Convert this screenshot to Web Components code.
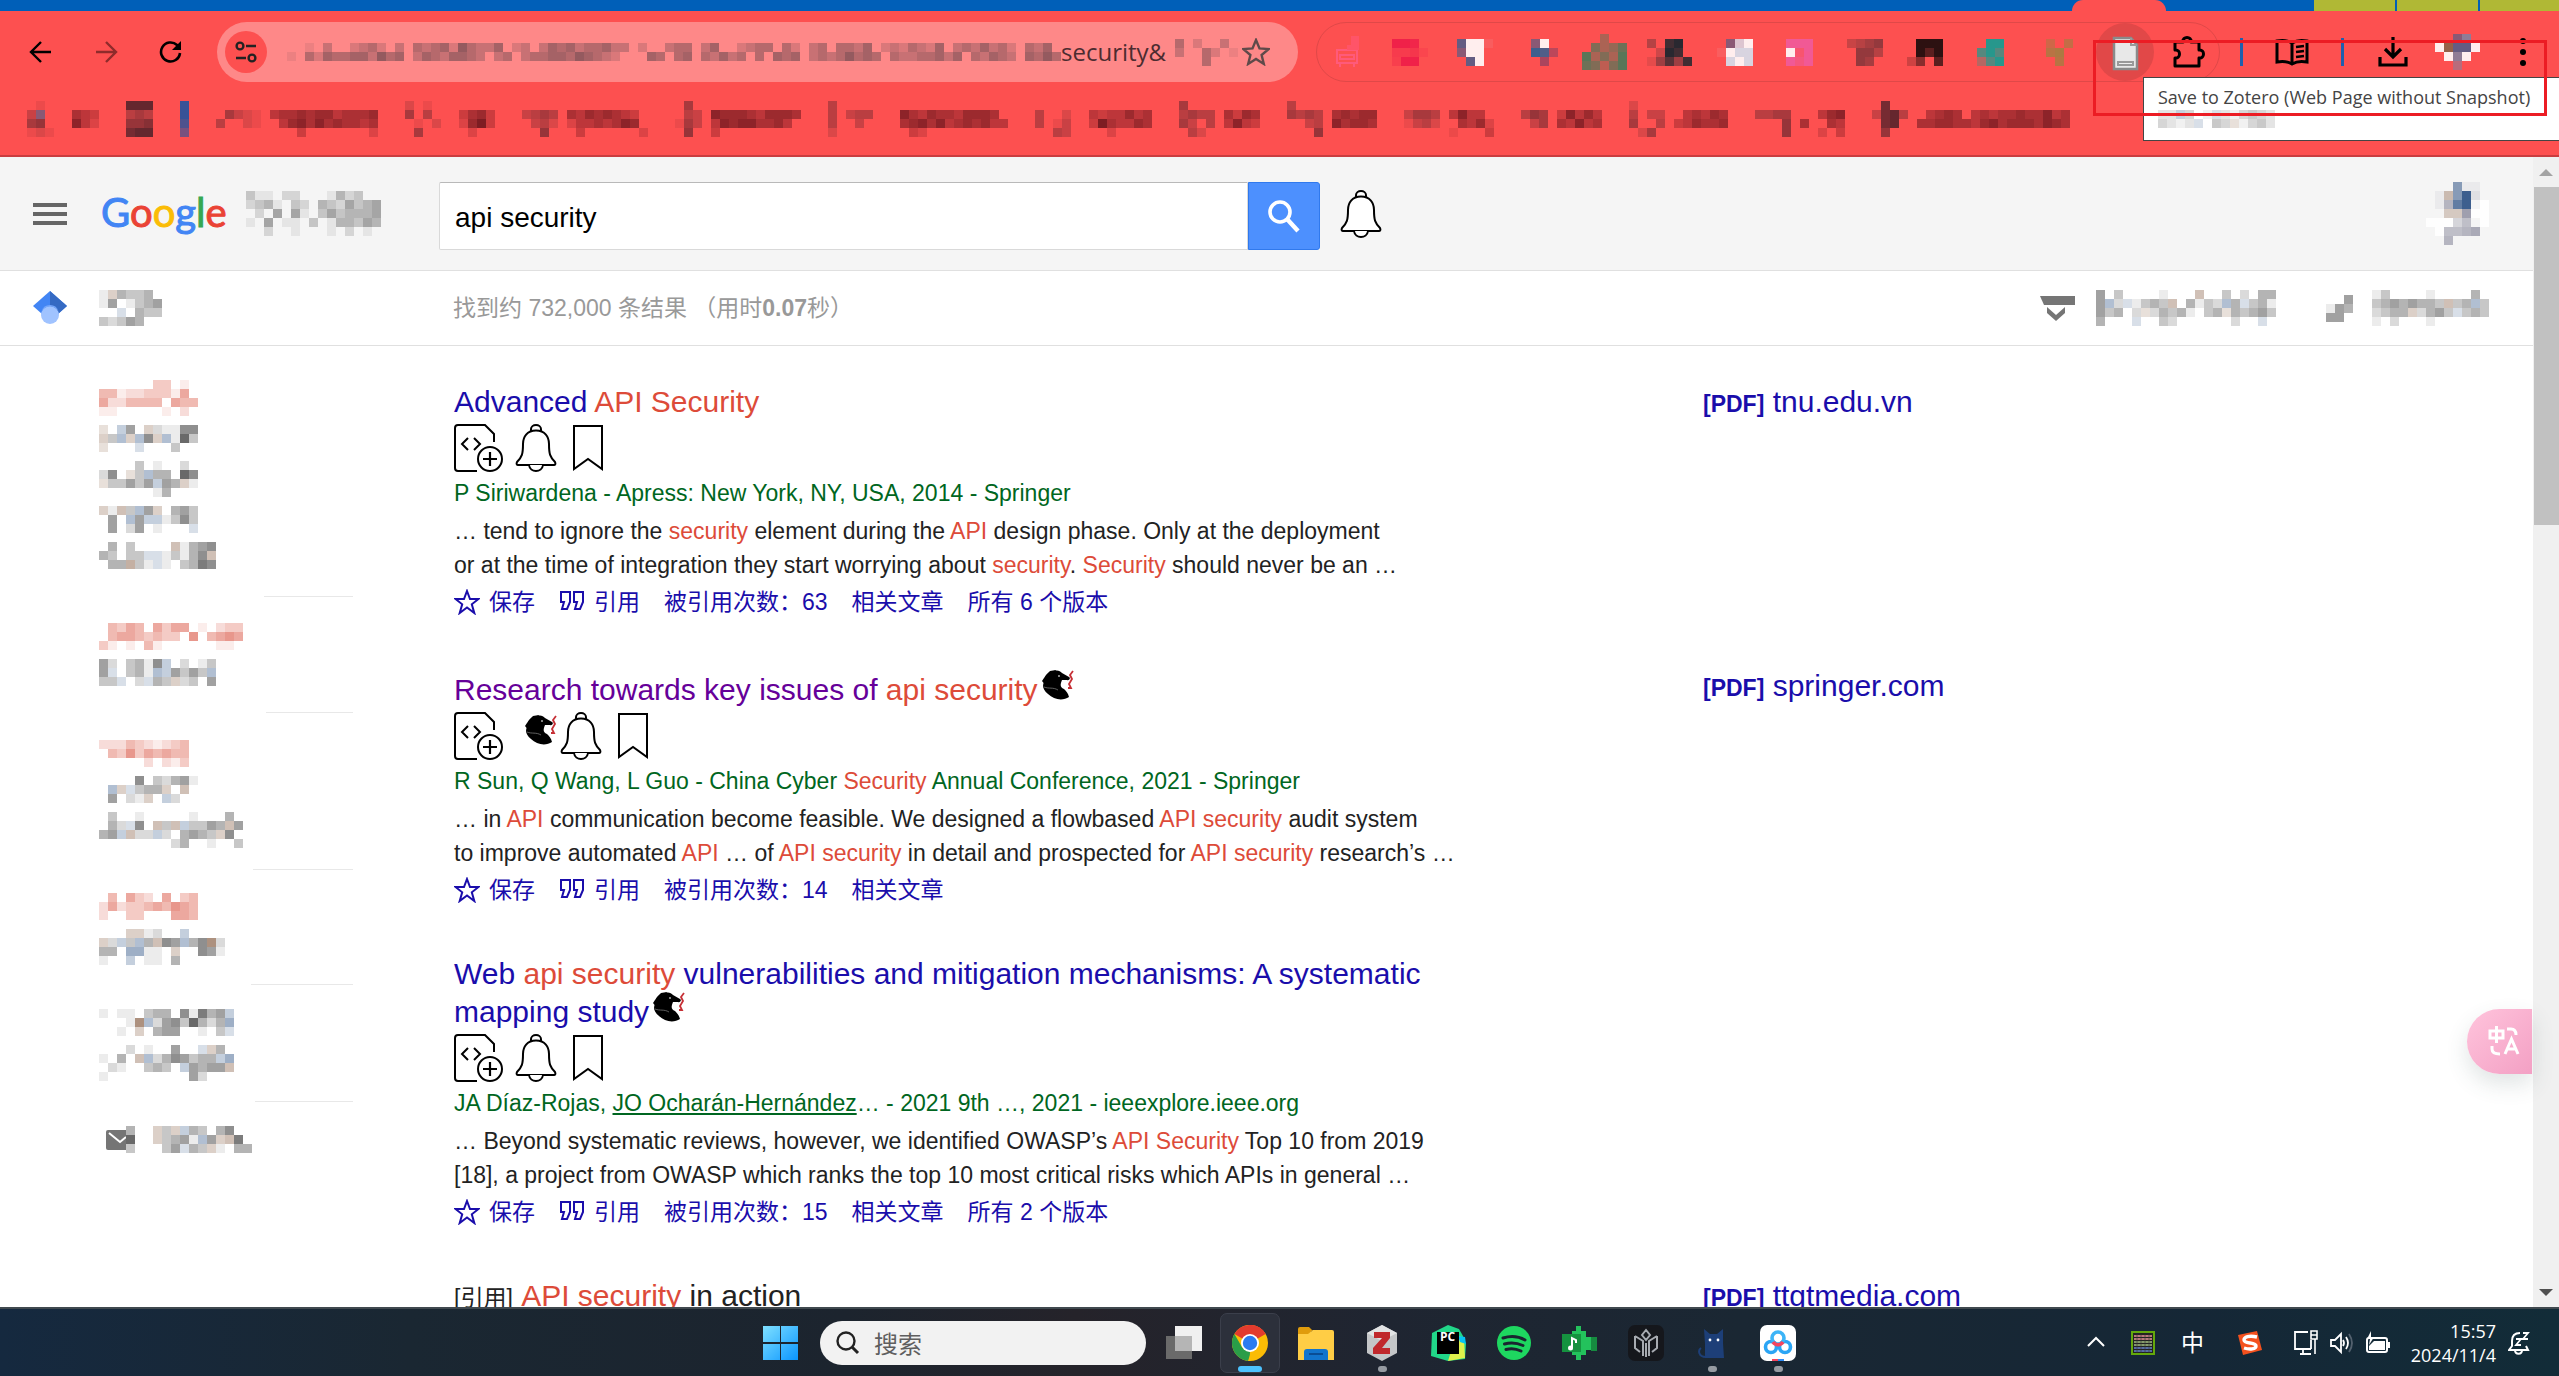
<!DOCTYPE html>
<html lang="zh-CN">
<head>
<meta charset="utf-8">
<title>api security - Google</title>
<style>
  html, body {
    margin: 0;
    height: 100%;
  }
  body {
    display: flex;
    flex-direction: column;
    overflow: hidden;
    background: #fff;
    color: #222;
    font: 23px/34px "Liberation Sans", "Noto Sans CJK SC", sans-serif;
  }
  a {
    color: #1a0dab;
    text-decoration: none;
  }
  a.visited {
    color: #609;
  }
  a.author {
    color: #006621;
    text-decoration: underline;
  }
  b {
    font-weight: inherit;
    color: #dd4b39;
  }
  scholar-page {
    flex: 1;
    min-height: 0;
  }
</style>
</head>
<body>
<browser-chrome></browser-chrome>

<scholar-page>
  <search-result>
    <a slot="title" href="#">Advanced <b>API Security</b></a>
    <span slot="authors">P Siriwardena - Apress: New York, NY, USA, 2014 - Springer</span>
    <span slot="snippet">… tend to ignore the <b>security</b> element during the <b>API</b> design phase. Only at the deployment<br>or at the time of integration they start worrying about <b>security</b>. <b>Security</b> should never be an …</span>
    <a slot="links" href="#">被引用次数：63</a>
    <a slot="links" href="#">相关文章</a>
    <a slot="links" href="#">所有 6 个版本</a>
    <a slot="file" href="#">tnu.edu.vn</a>
  </search-result>
  <search-result raven>
    <span slot="title"><a class="visited" href="#">Research towards key issues of <b>api security</b></a><ui-icon name="raven" style="margin-left: 4px"></ui-icon></span>
    <span slot="authors">R Sun, Q Wang, L Guo - China Cyber <b>Security</b> Annual Conference, 2021 - Springer</span>
    <span slot="snippet">… in <b>API</b> communication become feasible. We designed a flowbased <b>API security</b> audit system<br>to improve automated <b>API</b> … of <b>API security</b> in detail and prospected for <b>API security</b> research’s …</span>
    <a slot="links" href="#">被引用次数：14</a>
    <a slot="links" href="#">相关文章</a>
    <a slot="file" href="#">springer.com</a>
  </search-result>
  <search-result>
    <span slot="title"><a href="#">Web <b>api security</b> vulnerabilities and mitigation mechanisms: A systematic mapping study</a><ui-icon name="raven" style="margin: -8px 0 0 4px"></ui-icon></span>
    <span slot="authors">JA Díaz-Rojas, <a class="author" href="#">JO Ocharán-Hernández</a>… - 2021 9th …, 2021 - ieeexplore.ieee.org</span>
    <span slot="snippet">… Beyond systematic reviews, however, we identified OWASP’s <b>API Security</b> Top 10 from 2019<br>[18], a project from OWASP which ranks the top 10 most critical risks which APIs in general …</span>
    <a slot="links" href="#">被引用次数：15</a>
    <a slot="links" href="#">相关文章</a>
    <a slot="links" href="#">所有 2 个版本</a>
  </search-result>
  <search-result>
    <span slot="title"><span style="font-size: 23px">[引用]</span> <b>API security</b> in action</span>
    <a slot="file" href="#">ttgtmedia.com</a>
  </search-result>
</scholar-page>

<task-bar></task-bar>

<script>
const ICONS = {
  back: [24, 24, '<path d="M22 12H3M12 2L2 12l10 10" fill="none" stroke="#000" stroke-width="2.4"/>'],
  forward: [24, 24, '<path d="M2 12h19M12 2l10 10-10 10" fill="none" stroke="#8f2b2b" stroke-width="2.4"/>'],
  reload: [24, 24, '<path d="M21 13a9.5 9.5 0 1 1-3-8l3 3" fill="none" stroke="#000" stroke-width="2.6"/><path d="M22 1v9h-9z"/>'],
  tune: [42, 42, '<circle cx="21" cy="21" r="21" fill="#fd5050"/><g fill="none" stroke="#222" stroke-width="2.4"><circle cx="15" cy="15" r="3.4"/><path d="M21 15h10M11 27h10"/><circle cx="27" cy="27" r="3.4"/></g>'],
  star: [28, 28, '<path d="M14 2l3.500 8.400 9 .7-6.900 5.900 2.200 8.900L14 21l-7.800 4.900 2.200-8.900L1.500 11.100l9-.7z" fill="none" stroke="#5f4a4a" stroke-width="2.4"/>'],
  tv: [28, 32, '<path d="M4 14h20v13H4zM7 27v4M21 27v4M7 19h14v4H7z" fill="none" stroke="#ff5a7a" stroke-width="2"/><path d="M18 0h8v14H14V9h4z" fill="#ff5468"/>'],
  zotdoc: [58, 58, '<circle cx="29" cy="29" r="29" fill="#e14848"/><path d="M18 15h17l6 7v24H18z" fill="#e8e8e8" stroke="#8a8a8a" stroke-width="2.500"/><path d="M35 15v7h6" fill="none" stroke="#999" stroke-width="2"/><path d="M21 38h17v5H21z" fill="#999"/><path d="M23 40.500h13" stroke="#eee"/>'],
  puzzle: [34, 34, '<path d="M4 7h8c-1-6 9-6 8 0h8v8c6-1 6 9 0 8v8H4v-8c6 1 6-9 0-8z" fill="none" stroke="#000" stroke-width="3" stroke-linejoin="round"/>'],
  book: [34, 30, '<path d="M17 6C12 3 7 3 2 4v21c5-1 10-1 15 2 5-3 10-3 15-2V4c-5-1-10-1-15 2zM17 6v21" fill="none" stroke="#000" stroke-width="3"/><path d="M21 10l8-1M21 15l8-1M21 20l8-1" stroke="#000" stroke-width="2.400"/>'],
  download: [30, 30, '<path d="M15 0v18M7 12l8 8 8-8M2 20v8h26v-8" fill="none" stroke="#000" stroke-width="3.200"/>'],
  dots: [8, 30, '<circle cx="4" cy="4" r="3"/><circle cx="4" cy="15" r="3"/><circle cx="4" cy="26" r="3"/>'],
  menu: [34, 24, '<path d="M0 3h34M0 12h34M0 21h34" stroke="#666" stroke-width="4"/>'],
  search: [32, 34, '<circle cx="12" cy="13" r="10" fill="none" stroke="#fff" stroke-width="3.600"/><path d="M19 20l11 12" stroke="#fff" stroke-width="4.400"/>'],
  bell: [42, 48, '<path d="M16 7V5a5 4 0 0 1 10 0v2M21 6.500C12 6.500 8 13 8 20c0 10-1 13-6 18-1 2 0 3 1 3h36c1 0 2-1 1-3-5-5-6-8-6-18 0-7-4-13.500-13-13.500z" fill="#fff" stroke="#000" stroke-width="2"/><path d="M14 41c1 8 13 8 14 0" fill="#fff" stroke="#000" stroke-width="2"/>'],
  file: [50, 48, '<path d="M23 47H4q-3 0-3-3V4q0-3 3-3h27l9 9v8" fill="none" stroke="#000" stroke-width="2"/><path d="M14 14l-6 6 6 6M20 14l6 6-6 6" fill="none" stroke="#000" stroke-width="2"/><circle cx="36" cy="35" r="12" fill="#fff" stroke="#000" stroke-width="2"/><path d="M29 35h14M36 28v14" stroke="#000" stroke-width="2.200"/>'],
  bookmark: [30, 48, '<path d="M1 2h28v43L15 35 1 45z" fill="#fff" stroke="#000" stroke-width="2"/>'],
  raven: [32, 33, '<path d="M2 15C3 7 8 4 12 4c4-1 6 0 8 2l7 4c2 1 0 4-2 3l-5 0c-2 5-2 7 2 9 2 2 4 4 5 8-6 4-15 3-21-3C1 23 0 19 2 15z" fill="#000"/><path d="M0 14l4-6 4-4 6-1-4 8-6 8z" fill="#000"/><path d="M2 20c5 2 9 0 14 3" stroke="#777" stroke-width=".8" fill="none"/><circle cx="17" cy="9" r="1" fill="#aaa"/><path d="M31 4l-3 4 2 4-3 5 2 4-3 0" stroke="#c62f35" stroke-width="1.800" fill="none"/>'],
  save: [26, 26, '<path d="M13 2l3 8h8.500l-6.700 5.300L20.300 24 13 18.500 5.700 24l2.500-8.700L1.500 10H10z" fill="none" stroke="#1a0dab" stroke-width="2"/>'],
  cite: [26, 26, '<path d="M2 3h9v10l-3 7H3l2-7H2zM15 3h9v10l-3 7h-5l2-7h-3z" fill="none" stroke="#1a0dab" stroke-width="2"/>'],
  scholar: [34, 34, '<path d="M17 0L0 15l9 8h16l9-8z" fill="#4285f4"/><path d="M17 0l17 15-9 8-8-7z" fill="#356ac3"/><circle cx="17" cy="24" r="9" fill="#a0c3ff"/><path d="M8.500 20a9 9 0 0 1 17 0c-4-6-13-6-17 0z" fill="#76a7fa"/>'],
  cap: [38, 26, '<path d="M1 1h35v9H5z" fill="#757575"/><path d="M8 12l9 8 9-8v6l-9 8-9-8z" fill="#757575"/>'],
  mail: [20, 20, '<rect width="24" height="20" rx="2" fill="#757575"/><path d="M3 3l11 9 6-5" fill="none" stroke="#fff" stroke-width="2"/>'],
  translate: [34, 34, '<path d="M3 6h13v7H3zM9.500 1v17" fill="none" stroke="#fff" stroke-width="3"/><path d="M20 4h4q5 0 5 6M5 21v3q0 5 8 5" fill="none" stroke="#fff" stroke-width="3"/><path d="M18 29l6.500-15L31 29M21 24h7" fill="none" stroke="#fff" stroke-width="3"/>'],
  windows: [36, 36, '<defs><linearGradient id="w" x2="1" y2="1"><stop stop-color="#7fe0ff"/><stop offset="1" stop-color="#0a95ff"/></linearGradient></defs><path d="M0 1h17v16H0zM18 1h17v16H18zM0 19h17v16H0zM18 19h17v16H18z" fill="url(#w)"/>'],
  find: [24, 24, '<circle cx="10" cy="10" r="8.500" fill="none" stroke="#222" stroke-width="2.400"/><path d="M16 16l6 6" stroke="#222" stroke-width="3"/>'],
  taskview: [36, 36, '<path d="M0 11h26v23H0z" fill="#6a6a6a"/><path d="M9 1h27v25H9z" fill="#f0f0f0"/><path d="M9 11h17v15H9z" fill="#b5b5b5"/>'],
  chrome: [36, 36, '<circle cx="18" cy="18" r="18" fill="#fbbc05"/><path d="M18 18L2.400 9A18 18 0 0 1 33.600 9z" fill="#e33b2e"/><path d="M18 0a18 18 0 0 1 15.600 9H18z" fill="#e33b2e"/><path d="M2.400 9l7.800 13.500L18 27l-.5 9A18 18 0 0 1 2.400 9z" fill="#2a9d48"/><path d="M26 22l-8 14h-2l3-9z" fill="#fbbc05"/><circle cx="18" cy="18" r="9" fill="#fff"/><circle cx="18" cy="18" r="7.200" fill="#2b7bf0"/>'],
  folder: [36, 36, '<path d="M0 4q0-2 2-2h9l4 4h-2v6H0z" fill="#e09c0c"/><path d="M0 9h10l5-4h19q2 0 2 2v28H0z" fill="#ffcd45"/><path d="M6 35V27q0-3 3-3h18q3 0 3 3v8z" fill="#1274cc"/><path d="M11 29h14" stroke="#0a4d94" stroke-width="2"/>'],
  zotero: [32, 36, '<path d="M16 0l15 8v20l-15 8-15-8V8z" fill="#c4c6c8"/><path d="M16 0l15 8-15 8L1 8z" fill="#e2e3e4"/><path d="M8 7h16v6l-8 10h8v6H7v-6l9-10H8z" fill="#c0282c"/>'],
  pycharm: [36, 36, '<path d="M2 8L18 0l11 4 4 7 3 8-1 15-17 2L1 31z" fill="#21d789"/><path d="M26 10l8 3 1 20-17 3z" fill="#dff14b"/><path d="M28 11l7 1 1 7-6-2z" fill="#07c3f2"/><path d="M7 7h22v22H7z"/>'],
  spotify: [34, 34, '<circle cx="17" cy="17" r="17" fill="#1ed760"/><path d="M6 12c8-2.500 16-1.500 22 2M7.500 18c7-2 13-1 18.500 1.500M9 23.500c5-1.500 10-1 15 1.500" fill="none" stroke="#1a2530" stroke-width="3" stroke-linecap="round"/>'],
  music: [36, 36, '<path d="M14 1h5v5h5v6h5v3h6v11h-6v-1h-5v5h-5v5h-5v-5h-4V6h4z" fill="#23c25c"/><path d="M29 12h6v14h-6z" fill="#168b40"/><path d="M0 9h19v18H0z" fill="#15923f"/><path d="M10 23V13l4 2v3" fill="none" stroke="#fff" stroke-width="2"/><circle cx="8.500" cy="23" r="2.500" fill="#fff"/>'],
  armor: [36, 36, '<rect width="36" height="36" rx="7" fill="#15171c"/><path d="M7 11l8 5v15M29 11l-8 5v15M7 11v12l5 4M29 11v12l-5 4M18 18v14M18 5l-4 5 4 5 4-5z" fill="none" stroke="#a7abb1" stroke-width="2"/>'],
  cat: [28, 30, '<path d="M6 1l6 5h7l6-5v14l1 15H7V16z" fill="#1d3f78"/><path d="M8 29c-8 0-8-7-5-9" fill="none" stroke="#1d3f78" stroke-width="2"/><circle cx="12" cy="12" r="1.400" fill="#fff"/><circle cx="20" cy="12" r="1.400" fill="#fff"/>'],
  cloud: [36, 36, '<rect width="36" height="36" rx="7" fill="#fff"/><g fill="none" stroke-width="3.600"><circle cx="11" cy="22" r="5.500" stroke="#2aa5f5"/><circle cx="25" cy="22" r="5.500" stroke="#2aa5f5"/><circle cx="18" cy="13" r="6" stroke="#3cb4f7"/><path d="M13 17a6 6 0 0 0 10 0" stroke="#f5455f"/></g><path d="M12 34h6v2h-6z" fill="#f5455f"/><path d="M18 34h6v2h-6z" fill="#2a8bf5"/>'],
  up: [18, 24, '<path d="M1 15l8-8 8 8" fill="none" stroke="#fff" stroke-width="2"/>'],
  matrix: [24, 24, '<rect x="1" y="1" width="22" height="22" fill="#222" stroke="#64a90c" stroke-width="2"/><path d="M3 5h18M3 8h18" stroke="#b8787c" stroke-width="2"/><path d="M3 11h18M3 14h18" stroke="#85996b" stroke-width="2"/><path d="M3 17h18M3 20h18" stroke="#566ba4" stroke-width="2"/><path d="M6 3v19M10 3v19M14 3v19M18 3v19" stroke="#333" stroke-opacity=".6"/>'],
  sogou: [24, 24, '<path d="M0 4L19 0l5 19-19 5z" fill="#f4511e"/><path d="M19 6C11 4 6 6 6 9c0 4 12 2 12 6 0 3-6 4-12 2" fill="none" stroke="#fff" stroke-width="3.400"/>'],
  network: [24, 26, '<path d="M14 2H1v17h16M17 19V10M6 24h11M9 19v5" fill="none" stroke="#fff" stroke-width="1.800"/><path d="M17 1h6v8h-6zM17 5h6M21 9v15" fill="none" stroke="#fff" stroke-width="1.600"/>'],
  volume: [24, 24, '<path d="M1 9h4l6-6v18l-6-6H1z" fill="none" stroke="#fff" stroke-width="1.800"/><path d="M13 9q2 3 0 6M16 6q4 6 0 12" fill="none" stroke="#fff" stroke-width="1.800"/><path d="M19 3q6 9 0 18" fill="none" stroke="#53616e" stroke-width="1.800"/>'],
  battery: [24, 24, '<rect x="1" y="7" width="20" height="14" rx="2" fill="none" stroke="#fff" stroke-width="2"/><path d="M8 10h11v9H3v-4z" fill="#fff"/><path d="M22 11h2v6h-2zM5 0L1 8h3l-1 6 5-8H5z" fill="#fff"/>'],
  dnd: [22, 24, '<path d="M12 2C6 2 4 6 4 10v5l-3 4h19l-2-4M7 19c0 5 7 5 7 0" fill="none" stroke="#fff" stroke-width="2"/><path d="M8 8h5l-5 6h5M15 2h5l-5 6h5" fill="none" stroke="#fff" stroke-width="1.800"/>']
};

/**
 * Common parent: opens a shadow root and fills it from the class's markup.
 */
class BaseElement extends HTMLElement {
  constructor() {
    super();
    this.attachShadow({ mode: 'open' });
  }

  connectedCallback() {
    this.shadowRoot.innerHTML = this.render();
  }
}

/** <ui-icon name="..."> draws one glyph from ICONS. */
class UiIcon extends BaseElement {
  render() {
    const [w, h, body] = ICONS[this.getAttribute('name')];
    return `
      <style>
        :host { display: inline-block; flex: none; width: ${w}px; height: ${h}px; }
        svg { display: block; }
      </style>
      <svg width="${w}" height="${h}" viewBox="0 0 ${w} ${h}" aria-hidden="true">${body}</svg>
    `;
  }
}

/**
 * <pixel-mosaic rows="12.|3a4" ink="#444"> draws a censored patch of 9px cells.
 * 1-9 is the ink's strength, a-i the same in tan, A-I in blue, W is white.
 */
class PixelMosaic extends BaseElement {
  cell(c, x, y, ink) {
    if (c === '.') return '';
    let fill = ink;
    let level = Number(c);
    if (c === 'W') {
      fill = '#fff';
      level = 9;
    } else if (c >= 'a' && c <= 'i') {
      fill = '#8a6248';
      level = c.charCodeAt(0) - 95;
    } else if (c >= 'A' && c <= 'I') {
      fill = '#3d5f8e';
      level = c.charCodeAt(0) - 63;
    }
    return `<rect x="${x * 9}" y="${y * 9}" width="9" height="9" fill="${fill}" fill-opacity="${level / 10}"/>`;
  }

  render() {
    const rows = this.getAttribute('rows').split('|');
    const ink = this.getAttribute('ink') || '#444';
    const w = Math.max(...rows.map((r) => r.length)) * 9;
    const h = rows.length * 9;
    const cells = rows.map((r, y) => [...r].map((c, x) => this.cell(c, x, y, ink)).join('')).join('');
    return `
      <style>
        :host { display: block; flex: none; }
        svg { display: block; }
      </style>
      <svg width="${w}" height="${h}" shape-rendering="crispEdges" aria-hidden="true">${cells}</svg>
    `;
  }
}

/** Tab strip, toolbar, bookmarks and the extension tooltip. */
class BrowserChrome extends BaseElement {
  render() {
    const m = (rows, ink) => `<pixel-mosaic rows="${rows}" ink="${ink}"></pixel-mosaic>`;
    const extensions = [
      '<ui-icon name="tv"></ui-icon>',
      m('998.|4452|399.', '#ee1c48'),
      m('GWW1|EWW.|.GW.', '#dcd8e0'),
      m('.EW.|.IH4|..5.', '#5a3a6a'),
      m('..4..|.6457|84648|76368', '#2f7f5a'),
      m('3.89.|.298.|14748', '#12242c'),
      m('.E8W|1W99|.9W9', '#d4e2f0'),
      m('999|W49|969', '#f05a9c'),
      m('3456|.664|.65.', '#4e2a30'),
      m('.999.|.979.|25.7.', '#160a0a'),
      m('.99.|797.|379.', '#0f9f92'),
      m('4.5|67.|.6.', '#8a8a3c'),
      '<ui-icon name="zotdoc"></ui-icon>',
      '<ui-icon name="puzzle"></ui-icon>'
    ];
    const bookmarks = [
      ['.1.|3E.|56.|121', '....|.543|.742'],
      ['999|454|667|899', ''],
      ['9|9|8|6', ''],
      ['.....|.5321|4..21|.....', '............|455656645556|.46757565545|...3.......2'],
      ['2.1..|5.4..|.1.2.|.5...', '....|3563|2683|.2..'],
      ['....|3454|.342|..6.', '........|54656543|24454576|.3......2'],
      ['.5.|.43|153|.6.', '..........|7666546665|476775564.|3.........'],
      ['4.....|4.344.|4..3..|2.....', '.............|.75465546665.|.567574565644|..32.......'],
      ['....|4..2|4.13|..43', '........|.4344645|.3854465|...2....'],
      ['5...|4544|53.4|.42.', '....|5365|4743|....'],
      ['4...|5454|..34|...6', '.....|56566|75665|.....'],
      ['....|3554|1342|....', '.....|4744.|.5462|1...3'],
      ['...|465|.35|...', '.....|37464|54745|.....'],
      ['2...|4.33|5..4|.25.', '......|.45465|346556|......'],
      ['....|4455|...6|...6', '.....|..467|5..54|..2.3'],
      ['.8..|3894|.89.|.6..', '.................|.4565.45455655745.|55665546756665765|.................']
    ];
    return `
      <style>
        :host {
          display: block;
          position: relative;
          background: #fd5050;
          border-bottom: 2px solid #c93d40;
        }
        .tabs {
          display: flex;
          justify-content: flex-end;
          height: 11px;
          background: #005fb8;
        }
        .tab {
          width: 94px;
          height: 11px;
          margin-right: 148px;
          border-radius: 12px 12px 0 0;
          background: #fd5050;
        }
        .caption {
          width: 81px;
          margin-right: 2px;
          background: #b0b835;
        }
        .caption:last-child { width: 79px; margin: 0; }
        .bar {
          display: flex;
          align-items: center;
          height: 60px;
          padding: 11px 4px 0 8px;
        }
        button {
          display: grid;
          place-items: center;
          flex: none;
          width: 65px;
          height: 60px;
          padding: 0;
          border: 0;
          background: none;
        }
        .url {
          display: flex;
          flex: 1;
          align-items: center;
          min-width: 0;
          height: 60px;
          margin: 0 18px 0 14px;
          padding: 0 28px 0 8px;
          box-sizing: border-box;
          border-radius: 30px;
          background: #fe8888;
        }
        .address {
          display: flex;
          flex: 1;
          align-items: center;
          overflow: hidden;
          margin-left: 20px;
          color: #4c2c30;
          font: 24px/30px "Open Sans", sans-serif;
        }
        .extensions {
          display: flex;
          flex: none;
          height: 58px;
          border: 1px solid #e04848;
          border-radius: 30px;
        }
        .extensions button { width: 65px; height: 58px; }
        .extensions button:first-child { width: 60px; }
        .extensions button:last-child { width: 62px; }
        .rule { flex: none; width: 3px; height: 28px; background: #1f5fae; }
        .tools { display: flex; flex: none; align-items: center; margin-left: 20px; }
        .tools .wide { width: 98px; }
        .tools .load { margin-left: 16px; }
        .bookmarks {
          display: flex;
          gap: 27px;
          height: 54px;
          padding: 19px 0 0 27px;
        }
        .bookmarks a { display: flex; gap: 9px; }
        .tooltip {
          position: absolute;
          right: 0;
          top: 77px;
          width: 401px;
          height: 62px;
          padding-left: 14px;
          border: solid #444;
          border-width: 1px 0 1px 1px;
          background: #fff;
          color: #444;
          font: 18px/38px "Open Sans", sans-serif;
          white-space: nowrap;
        }
        .tooltip pixel-mosaic { margin-top: -6px; }
        .frame {
          position: absolute;
          right: 12px;
          top: 40px;
          width: 448px;
          height: 70px;
          border: 3px solid #ec1c24;
        }
      </style>
      <div class="tabs"><span class="tab"></span><span class="caption"></span><span class="caption"></span><span class="caption"></span></div>
      <div class="bar">
        <button aria-label="后退"><ui-icon name="back"></ui-icon></button>
        <button aria-label="前进"><ui-icon name="forward"></ui-icon></button>
        <button aria-label="重新加载"><ui-icon name="reload"></ui-icon></button>
        <div class="url">
          <ui-icon name="tune"></ui-icon>
          <div class="address">
            ${m('..1.3..2342.3.4345264335.23.3545344533.2..344.35..2344.42.34.4435.2324325.3435342.435|1.42544553645.35435543.34.34455465432...54.45.43534.4.545.34346454.43344535.43543.5464', '#4c3c44')}
            <span>security&amp;</span>
            ${m('.4.2..3.|.3..42.1|....4...', '#4c3c44')}
          </div>
          <ui-icon name="star"></ui-icon>
        </div>
        <div class="extensions">${extensions.map((x) => `<button aria-label="扩展程序">${x}</button>`).join('')}</div>
        <div class="tools">
          <span class="rule"></span>
          <button class="wide" aria-label="阅读清单"><ui-icon name="book"></ui-icon></button>
          <span class="rule"></span>
          <button class="load" aria-label="下载"><ui-icon name="download"></ui-icon></button>
          <button aria-label="个人资料">${m('..E8.|WhGGW|.W8W.|..5..', '#7387a8')}</button>
          <button aria-label="更多"><ui-icon name="dots"></ui-icon></button>
        </div>
      </div>
      <div class="bookmarks">${bookmarks.map(([icon, label], i) => `<a href="#">${m(icon, i === 2 ? '#22529e' : '#54222a')}${label ? m(label, '#5c1018') : ''}</a>`).join('')}</div>
      <div class="tooltip">Save to Zotero (Web Page without Snapshot)${m('22B3.1A213432.|3212A.43a1342.', '#777')}</div>
      <div class="frame"></div>
    `;
  }
}

/** Scholar header with menu, logo and the search form. */
class ScholarHeader extends BaseElement {
  render() {
    return `
      <style>
        :host {
          display: flex;
          align-items: center;
          height: 113px;
          border-bottom: 1px solid #e0e0e0;
          background: #f5f5f5;
        }
        .brand {
          display: flex;
          align-items: center;
          flex: none;
          width: 439px;
        }
        button { padding: 0; border: 0; background: none; }
        .menu { display: flex; margin: 0 34px 0 33px; }
        .logo {
          padding-bottom: 4px;
          font: 40px/48px Lato, sans-serif;
          text-decoration: none;
          -webkit-text-stroke: 1px;
        }
        .brand pixel-mosaic { margin-left: 10px; }
        form {
          display: flex;
          flex: 0 1 881px;
          height: 68px;
          padding-top: 4px;
        }
        input {
          flex: 1;
          min-width: 0;
          padding: 4px 15px 0;
          border: 1px solid #d9d9d9;
          border-top-color: #b9b9b9;
          border-radius: 2px 0 0 2px;
          font: 28px "Liberation Sans", sans-serif;
          color: #000;
        }
        form button {
          display: grid;
          place-items: center;
          width: 72px;
          border: 1px solid #3079ed;
          border-radius: 0 3px 3px 0;
          background: #4d90fe;
        }
        .alert { display: flex; margin-left: 20px; }
        .avatar { margin: 0 44px 0 auto; }
      </style>
      <div class="brand">
        <button class="menu" aria-label="菜单"><ui-icon name="menu"></ui-icon></button>
        <a class="logo" href="#"><span style="color: #4285f4">G</span><span style="color: #ea4335">o</span><span style="color: #fbbc05">o</span><span style="color: #4285f4">g</span><span style="color: #34a853">l</span><span style="color: #ea4335">e</span></a>
        <pixel-mosaic ink="#555" rows=".311.22...1423..|.2341.32.4325345|..2.5.51.3534445|.1.5.11.3.144354|...2..1...1.2.1."></pixel-mosaic>
      </div>
      <form>
        <input type="text" aria-label="搜索" value="api security">
        <button type="button" aria-label="搜索"><ui-icon name="search"></ui-icon></button>
      </form>
      <button class="alert" aria-label="创建快讯"><ui-icon name="bell"></ui-icon></button>
      <pixel-mosaic class="avatar" ink="#8a8a9c" rows="...E11.|.1cEI2.|.16GI.W|..bb8WW|WWW35.W|.W5567.|..6...."></pixel-mosaic>
    `;
  }
}

/** Row with the result count and the account links. */
class ScholarSubheader extends BaseElement {
  render() {
    return `
      <style>
        :host {
          display: flex;
          align-items: center;
          height: 74px;
          border-bottom: 1px solid #e0e0e0;
          color: #999;
        }
        .left {
          display: flex;
          align-items: center;
          flex: none;
          gap: 32px;
          width: 420px;
          padding-left: 33px;
        }
        nav { display: flex; gap: 50px; margin: 0 44px 0 auto; }
        nav a { display: flex; align-items: center; gap: 19px; }
        strong { font-weight: bold; }
      </style>
      <div class="left">
        <ui-icon name="scholar"></ui-icon>
        <pixel-mosaic rows="1b4334.|15.1345|..A.433|32354.."></pixel-mosaic>
      </div>
      <span>找到约 732,000 条结果 （用时<strong>0.07</strong>秒）</span>
      <nav>
        <a href="#"><ui-icon name="cap"></ui-icon><pixel-mosaic rows="5.3....1...c..3.2.44|5C2A1343c.4132C4A341|534.2a24341.34a43453|4...A..32......2..A."></pixel-mosaic></a>
        <a href="#"><pixel-mosaic rows="..5|154|55."></pixel-mosaic><pixel-mosaic rows="13....1....4.|34545443c34C3|2344b2453A343|1.2...1......"></pixel-mosaic></a>
      </nav>
    `;
  }
}

/** Left column: date, sort and type filters. */
class FilterSidebar extends BaseElement {
  render() {
    const red = '#d9523f';
    const grey = '#444';
    // tail: space under the last item, rule: visible length of the divider
    const groups = [
      { top: 34, tail: 27, rule: 89, items: [
        [red, '......33.1.|4412233315.|5224444.544|11.....1.2.'],
        [grey, 'a.B5.b21166|b3CbC6bC183|a...A...3..'],
        [grey, '....3.1..2..|26.a3C44.86.|a33535B54b1.|......14....'],
        [grey, 'b1c3C5b.453|.5.C5BB1363|.5.25.1...A'],
        [grey, '.4.3....c1456|43.33AA13146c|.44d31A1.3476']
      ] },
      { top: 26, tail: 26, rule: 87, items: [
        [red, '.4354.5355.1.233|.45543433.6.4565|31.1.41......11.'],
        [grey, '52.3416B.2.13|5A.341CB5353C|33A.2A43b23.5']
      ] },
      { top: 27, tail: 21, rule: 100, items: [
        [red, '2224321234|.436354544|.....2.213'],
        [grey, '....6.32451|.CbA344b.c.|.5.21b.B2..'],
        [grey, '.3..1.....1...4.|.42A6.c3cB3354c5|45Bc22B2.4543b6.|........24..1..3']
      ] },
      { top: 23, tail: 19, rule: 102, items: [
        [red, '.4.532.5.34|25233454654|2..33...554'],
        [grey, '...bb12..B....|b2B3C4c65C46f2|44.DD11.b..651|1..B.11.4.....']
      ] },
      { top: 24, tail: 20, rule: 98, items: [
        [grey, '1.11.344.61745B|...1fC25638424D|..1.b.455..1.3A'],
        [grey, '...2.1..5..Ab4.|1.4.cC2465344BD|.21..343.B5455c|1.........52...']
      ] }
    ];
    return `
      <style>
        :host { display: block; flex: none; width: 454px; }
        section {
          display: grid;
          justify-items: start;
          gap: 9px;
          width: 254px;
          margin-left: 99px;
        }
        hr {
          height: 1px;
          margin: 0 101px 0 auto;
          border: 0;
          background: #e8e8e8;
        }
        .mail { display: flex; align-items: center; margin: 24px 0 0 106px; }
        .mail pixel-mosaic + pixel-mosaic { margin-left: 18px; }
      </style>
      ${groups.map((g) => `
        <section style="padding: ${g.top}px 0 ${g.tail}px">
          ${g.items.map(([ink, rows]) => `<a href="#"><pixel-mosaic ink="${ink}" rows="${rows}"></pixel-mosaic></a>`).join('')}
        </section>
        <hr style="width: ${g.rule}px">`).join('')}
      <a class="mail" href="#"><ui-icon name="mail"></ui-icon><pixel-mosaic rows="4|8|3"></pixel-mosaic><pixel-mosaic rows="b3bB43.46..|b3451C5bc7.|.35A43b1.44"></pixel-mosaic></a>
    `;
  }
}

/** One hit of the result list. */
class SearchResult extends BaseElement {
  render() {
    const file = this.querySelector('[slot="file"]') !== null;
    const full = this.querySelector('[slot="snippet"]') !== null;
    const body = `
      <div class="actions">
        <button aria-label="添加代码"><ui-icon name="file"></ui-icon></button>
        ${this.hasAttribute('raven') ? '<ui-icon class="raven" name="raven"></ui-icon>' : ''}
        <button class="bell" aria-label="快讯"><ui-icon name="bell"></ui-icon></button>
        <button aria-label="书签"><ui-icon name="bookmark"></ui-icon></button>
      </div>
      <div class="authors"><slot name="authors"></slot></div>
      <div class="snippet"><slot name="snippet"></slot></div>
      <div class="links">
        <a href="#"><ui-icon name="save"></ui-icon>保存</a>
        <a href="#"><ui-icon name="cite"></ui-icon>引用</a>
        <slot name="links"></slot>
      </div>`;
    return `
      <style>
        :host {
          display: grid;
          grid-template-columns: 1249px 1fr;
          margin-bottom: 47px;
        }
        h3 {
          max-width: 1030px;
          margin: 0;
          font-size: 30px;
          font-weight: normal;
          line-height: 38px;
        }
        button { display: flex; padding: 0; border: 0; background: none; }
        .actions { display: flex; height: 48px; padding: 3px 0 4px; gap: 11px; }
        .raven { margin-left: 10px; margin-right: -8px; }
        .bell { margin-right: 5px; }
        .authors { color: #006621; }
        .snippet { margin: 4px 0 3px; white-space: nowrap; }
        .links { display: flex; gap: 24px; white-space: nowrap; padding-bottom: 1px; }
        .links a {
          display: flex;
          align-items: center;
          gap: 9px;
          color: #1a0dab;
          text-decoration: none;
        }
        .file { font-size: 30px; line-height: 38px; }
        .tag { color: #1a0dab; font-size: 23px; font-weight: bold; }
      </style>
      <div>
        <h3><slot name="title"></slot></h3>
        ${full ? body : ''}
      </div>
      ${file ? '<div class="file"><span class="tag">[PDF]</span> <slot name="file"></slot></div>' : ''}
    `;
  }
}

/** The web page itself, with its scrollbar and the floating translate button. */
class ScholarPage extends BaseElement {
  render() {
    return `
      <style>
        :host { display: flex; position: relative; overflow: hidden; }
        .page { flex: 1; min-width: 0; }
        .columns { display: flex; }
        main { flex: 1; min-width: 0; padding-top: 37px; }
        .scroll {
          display: flex;
          flex-direction: column;
          align-items: center;
          flex: none;
          width: 26px;
          background: #f0f0f0;
        }
        .scroll i {
          border: solid transparent;
          border-width: 0 7px 7px;
          border-bottom-color: #a3a3a3;
          margin: 12px 0 11px;
        }
        .scroll i:last-child {
          border-width: 7px 7px 0;
          border-top-color: #505050;
          margin-top: auto;
        }
        .thumb { align-self: stretch; height: 338px; margin-left: 1px; background: #c1c1c1; }
        .translate {
          position: absolute;
          right: 27px;
          top: 852px;
          display: grid;
          place-items: center;
          width: 65px;
          height: 65px;
          padding: 0 0 0 8px;
          border: 0;
          border-radius: 33px 0 0 33px;
          background: linear-gradient(135deg, #ffc4dc, #f3a0c4);
          box-shadow: 0 10px 22px rgba(60, 90, 90, .16);
        }
      </style>
      <div class="page">
        <scholar-header></scholar-header>
        <scholar-subheader></scholar-subheader>
        <div class="columns">
          <filter-sidebar></filter-sidebar>
          <main><slot></slot></main>
        </div>
      </div>
      <div class="scroll"><i></i><div class="thumb"></div><i></i></div>
      <button class="translate" aria-label="翻译"><ui-icon name="translate"></ui-icon></button>
    `;
  }
}

/** Windows task bar. */
class TaskBar extends BaseElement {
  render() {
    const apps = ['taskview', 'chrome', 'folder', 'zotero', 'pycharm', 'spotify', 'music', 'armor', 'cat', 'cloud'];
    const running = ['zotero', 'cat', 'cloud'];
    return `
      <style>
        :host {
          display: grid;
          grid-template-columns: 1fr auto 1fr;
          flex: none;
          height: 67px;
          border-top: 2px solid #40494f;
          background: linear-gradient(90deg, #15293f, #1a2732 16%, #1c242e 33%, #25232a 42%, #1f2531 54%, #1a2733 68%, #152736 86%, #122c38);
          color: #fff;
        }
        .center { grid-column: 2; display: flex; align-items: center; }
        button {
          display: grid;
          place-items: center;
          position: relative;
          width: 60px;
          height: 60px;
          margin: 0 3px;
          padding: 0;
          border: 1px solid transparent;
          border-radius: 7px;
          background: none;
        }
        .active { border-color: #3b3f4b; background: #2c303b; }
        .mark {
          position: absolute;
          bottom: 0;
          width: 9px;
          height: 6px;
          border-radius: 3px;
          background: #969ba2;
        }
        .active .mark { width: 24px; background: #4cc2ff; }
        .pc {
          position: absolute;
          top: 16px;
          left: 21px;
          color: #fff;
          font: bold 12px/14px "Open Sans", sans-serif;
        }
        label {
          display: flex;
          align-items: center;
          gap: 14px;
          width: 326px;
          height: 44px;
          margin: 0 5px 0 6px;
          padding-left: 16px;
          box-sizing: border-box;
          border-radius: 22px;
          background: #f2f2f2;
        }
        input {
          min-width: 0;
          flex: 1;
          padding: 0;
          border: 0;
          background: none;
          outline: 0;
          font: 24px "Noto Sans CJK SC", sans-serif;
        }
        input::placeholder { color: #5f5f5f; }
        .tray { display: flex; align-items: center; justify-content: flex-end; padding-right: 29px; }
        .tray > * { margin-left: 12px; }
        .wide { margin-right: 14px; }
        .ime { margin-right: 22px; }
        .input { margin-right: 20px; }
        .time {
          width: 94px;
          text-align: right;
          font: 18px/24px "Open Sans", sans-serif;
          white-space: nowrap;
        }
      </style>
      <div class="center">
        <button aria-label="开始"><ui-icon name="windows"></ui-icon></button>
        <label><ui-icon name="find"></ui-icon><input type="text" placeholder="搜索" aria-label="搜索"></label>
        ${apps.map((a) => `
          <button class="${a === 'chrome' ? 'active' : ''}" aria-label="${a}">
            <ui-icon name="${a}"></ui-icon>
            ${a === 'pycharm' ? '<span class="pc">PC</span>' : ''}
            ${a === 'chrome' || running.includes(a) ? '<span class="mark"></span>' : ''}
          </button>`).join('')}
      </div>
      <div class="tray">
        <ui-icon class="wide" name="up"></ui-icon>
        <ui-icon class="wide" name="matrix"></ui-icon>
        <span class="ime">中</span>
        <ui-icon class="input" name="sogou"></ui-icon>
        <ui-icon name="network"></ui-icon>
        <ui-icon name="volume"></ui-icon>
        <ui-icon name="battery"></ui-icon>
        <div class="time">15:57<br>2024/11/4</div>
        <ui-icon name="dnd"></ui-icon>
      </div>
    `;
  }
}

customElements.define('ui-icon', UiIcon);
customElements.define('pixel-mosaic', PixelMosaic);
customElements.define('browser-chrome', BrowserChrome);
customElements.define('scholar-header', ScholarHeader);
customElements.define('scholar-subheader', ScholarSubheader);
customElements.define('filter-sidebar', FilterSidebar);
customElements.define('search-result', SearchResult);
customElements.define('scholar-page', ScholarPage);
customElements.define('task-bar', TaskBar);
</script>
</body>
</html>
